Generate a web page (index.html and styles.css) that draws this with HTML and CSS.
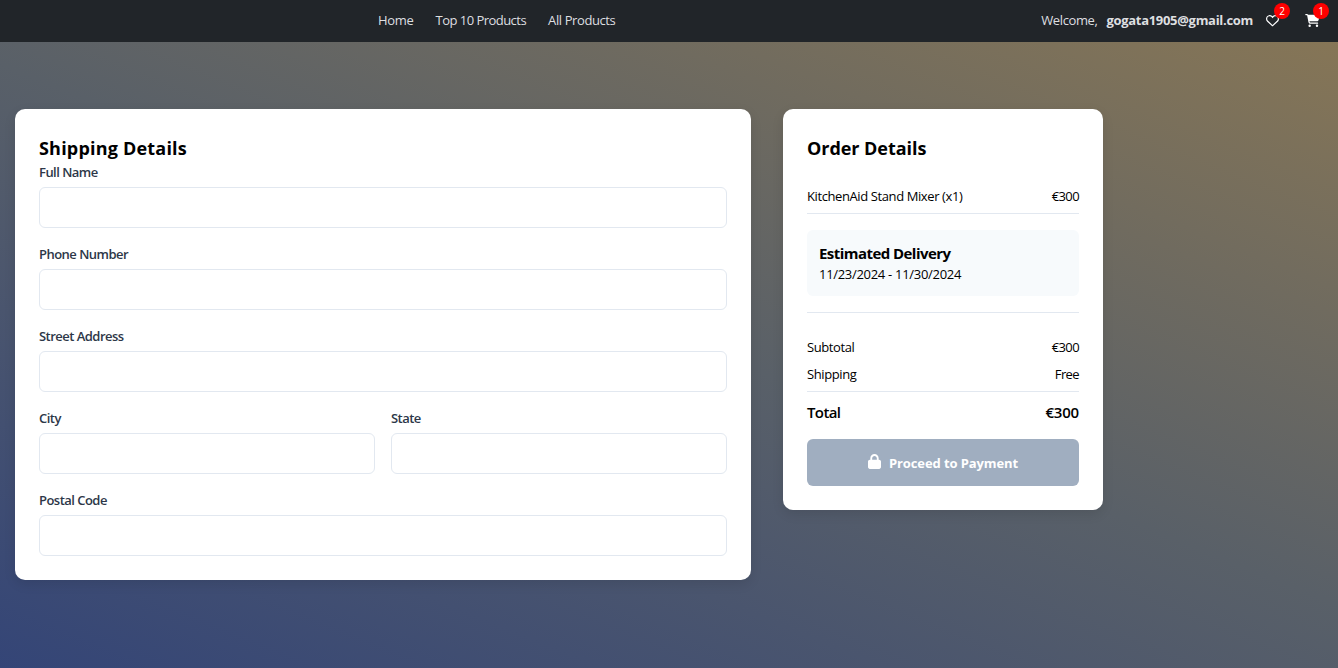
FILE: index.html
```html
<!DOCTYPE html>
<html lang="en">
<head>
<meta charset="utf-8">
<title>Checkout</title>
<link rel="stylesheet" href="styles.css">
</head>
<body>
<header class="navbar">
  <nav class="nav-links">
    <a class="nav-home">Home</a>
    <a class="nav-top">Top 10 Products</a>
    <a class="nav-all">All Products</a>
  </nav>
  <div class="nav-user">
    <span class="welcome">Welcome,</span>
    <strong class="email">gogata1905@gmail.com</strong>
    <span class="nav-icon heart">
      <svg width="13" height="13" viewBox="0 0 512 512" fill="#fff"><path d="M225.800 468.200l-2.500-2.300L48.100 303.200C17.400 274.700 0 234.700 0 192.800v-3.300c0-70.400 50-130.800 119.200-144C158.600 37.900 198.900 47 231 69.600c9 6.400 17.400 13.800 25 22.300c4.200-4.800 8.700-9.200 13.500-13.300c3.700-3.200 7.500-6.200 11.500-9C313.100 47 353.400 37.900 392.800 45.400C462 58.600 512 119.100 512 189.500v3.300c0 41.900-17.400 81.900-48.100 110.400L288.700 465.900l-2.500 2.300c-8.200 7.600-19 11.900-30.200 11.900s-22-4.200-30.200-11.900zM239.100 145l-21.200-23.800C197.100 98.500 161 87.300 128.200 92.600C81.600 101.500 48 142.100 48 189.500v3.300c0 28.500 11.900 55.800 32.800 75.200L256 430.700 431.200 268c20.900-19.400 32.800-46.700 32.800-75.200v-3.300c0-47.300-33.600-88-80.100-96.900c-34-6.500-69 5.400-92 31.200L256 163.800z"/></svg>
      <span class="badge">2</span>
    </span>
    <span class="nav-icon cart">
      <svg width="15" height="13" viewBox="0 0 576 512" fill="#fff"><path d="M0 24C0 10.700 10.700 0 24 0H69.500c22 0 41.500 12.800 50.600 32h411c26.300 0 45.500 25 38.600 50.400l-41 152.300c-8.500 31.400-37 53.300-69.500 53.300H170.700l5.400 28.500c2.200 11.300 12.100 19.500 23.600 19.500H488c13.300 0 24 10.700 24 24s-10.700 24-24 24H199.700c-34.600 0-64.300-24.600-70.700-58.500L77.400 54.500c-.7-3.800-4-6.500-7.900-6.500H24C10.700 48 0 37.300 0 24zM128 464a48 48 0 1 1 96 0 48 48 0 1 1-96 0zm336-48a48 48 0 1 1 0 96 48 48 0 1 1 0-96z"/></svg>
      <span class="badge">1</span>
    </span>
  </div>
</header>
<main class="checkout">
  <section class="card shipping">
    <h2 class="card-title">Shipping Details</h2>
    <form class="form">
      <div class="field"><label for="name">Full Name</label><input id="name" type="text"></div>
      <div class="field"><label for="phone">Phone Number</label><input id="phone" type="text"></div>
      <div class="field"><label for="street">Street Address</label><input id="street" type="text"></div>
      <div class="field-row">
        <div class="field"><label for="city">City</label><input id="city" type="text"></div>
        <div class="field"><label for="state">State</label><input id="state" type="text"></div>
      </div>
      <div class="field"><label for="postal">Postal Code</label><input id="postal" type="text"></div>
    </form>
  </section>
  <section class="card order">
    <h2 class="card-title order-title">Order Details</h2>
    <div class="line item"><span class="item-name">KitchenAid Stand Mixer (x1)</span><span class="price">€300</span></div>
    <div class="delivery">
      <h3 class="delivery-title">Estimated Delivery</h3>
      <p class="delivery-dates">11/23/2024 - 11/30/2024</p>
    </div>
    <div class="summary">
      <div class="line"><span class="subtotal">Subtotal</span><span class="price">€300</span></div>
      <div class="line"><span class="ship">Shipping</span><span class="price">Free</span></div>
      <div class="line total"><span>Total</span><span class="total-price">€300</span></div>
    </div>
    <button class="pay" type="button">
      <svg width="13" height="15" viewBox="0 0 448 512" fill="#fff"><path d="M144 144v48H304V144c0-44.200-35.800-80-80-80s-80 35.800-80 80zM80 192V144C80 64.500 144.500 0 224 0s144 64.500 144 144v48h16c35.300 0 64 28.700 64 64V448c0 35.300-28.700 64-64 64H64c-35.300 0-64-28.700-64-64V256c0-35.300 28.700-64 64-64H80z"/></svg>
      <span>Proceed to Payment</span>
    </button>
  </section>
</main>
</body>
</html>
```
FILE: styles.css
```css
* { box-sizing: border-box; }
body {
  margin: 0;
  height: 668px;
  overflow: hidden;
  font-family: "Open Sans", "Noto Sans", sans-serif;
  font-size: 13px;
  color: #000;
  background: linear-gradient(22deg, #344577, #596068 50%, #897755);
  white-space: nowrap;
}
h2, h3, p { margin: 0; }
.navbar {
  height: 42px;
  padding: 0 18px 2px 378px;
  display: flex;
  align-items: center;
  justify-content: space-between;
  background: #212529;
  color: #dedfe0;
}
.nav-links { display: flex; gap: 22px; letter-spacing: -0.3px; }
.nav-top { letter-spacing: -0.53px; }
.nav-all { letter-spacing: -0.4px; }
.nav-user { display: flex; align-items: center; }
.welcome { margin-right: 9px; letter-spacing: -0.4px; }
.email { margin-right: 13px; letter-spacing: -0.3px; }
.nav-icon { position: relative; display: flex; }
.heart { margin-right: 26px; }
.badge {
  position: absolute;
  left: 8px;
  top: -11px;
  width: 16px;
  height: 16px;
  border-radius: 50%;
  background: #f00;
  color: #fff;
  font-size: 10px;
  line-height: 16px;
  text-align: center;
}
.checkout {
  display: flex;
  align-items: flex-start;
  gap: 32px;
  padding: 67px 15px 0;
}
.card {
  padding: 24px;
  background: #fff;
  border-radius: 10px;
  box-shadow: 0 4px 12px rgba(0, 0, 0, 0.1);
}
.shipping { width: 736px; height: 471px; }
.order { width: 320px; height: 401px; }
.card-title {
  padding-top: 2px;
  font-size: 18px;
  font-weight: 700;
  line-height: 27px;
  letter-spacing: 0.2px;
}
.form { display: flex; flex-direction: column; gap: 16px; }
.field { display: flex; flex: 1; flex-direction: column; gap: 4px; }
.field label {
  font-weight: 600;
  line-height: 21px;
  color: #2d3748;
  letter-spacing: -0.53px;
}
.field input {
  width: 100%;
  height: 41px;
  border: 1px solid #e2e8f0;
  border-radius: 6px;
  background: #fff;
}
.field-row { display: flex; gap: 16px; }
.order-title { margin-bottom: 24px; letter-spacing: -0.05px; }
.line { display: flex; justify-content: space-between; line-height: 20px; letter-spacing: -0.4px; }
.price { letter-spacing: -0.6px; }
.item { height: 28px; border-bottom: 1px solid #e2e8f0; }
.delivery {
  height: 66px;
  margin: 16px 0;
  padding: 12px;
  border-radius: 6px;
  background: #f7fafc;
}
.delivery-title { font-size: 15px; line-height: 23px; letter-spacing: -0.55px; }
.delivery-dates { line-height: 19px; letter-spacing: -0.3px; }
.summary { border-top: 1px solid #e2e8f0; padding-top: 24px; }
.summary .line { height: 27px; }
.summary .total {
  height: 48px;
  padding-top: 10px;
  border-top: 1px solid #e2e8f0;
  font-size: 15px;
  font-weight: 600;
}
.total span { letter-spacing: -0.6px; }
.total .total-price { letter-spacing: -0.2px; }
.pay {
  display: flex;
  align-items: center;
  justify-content: center;
  gap: 8px;
  width: 100%;
  height: 47px;
  border: 0;
  border-radius: 6px;
  background: #a0aec0;
  color: #fff;
  font: 700 13px "Open Sans", "Noto Sans", sans-serif;
  letter-spacing: -0.1px;
}
.pay svg { margin-bottom: 2px; }
```
